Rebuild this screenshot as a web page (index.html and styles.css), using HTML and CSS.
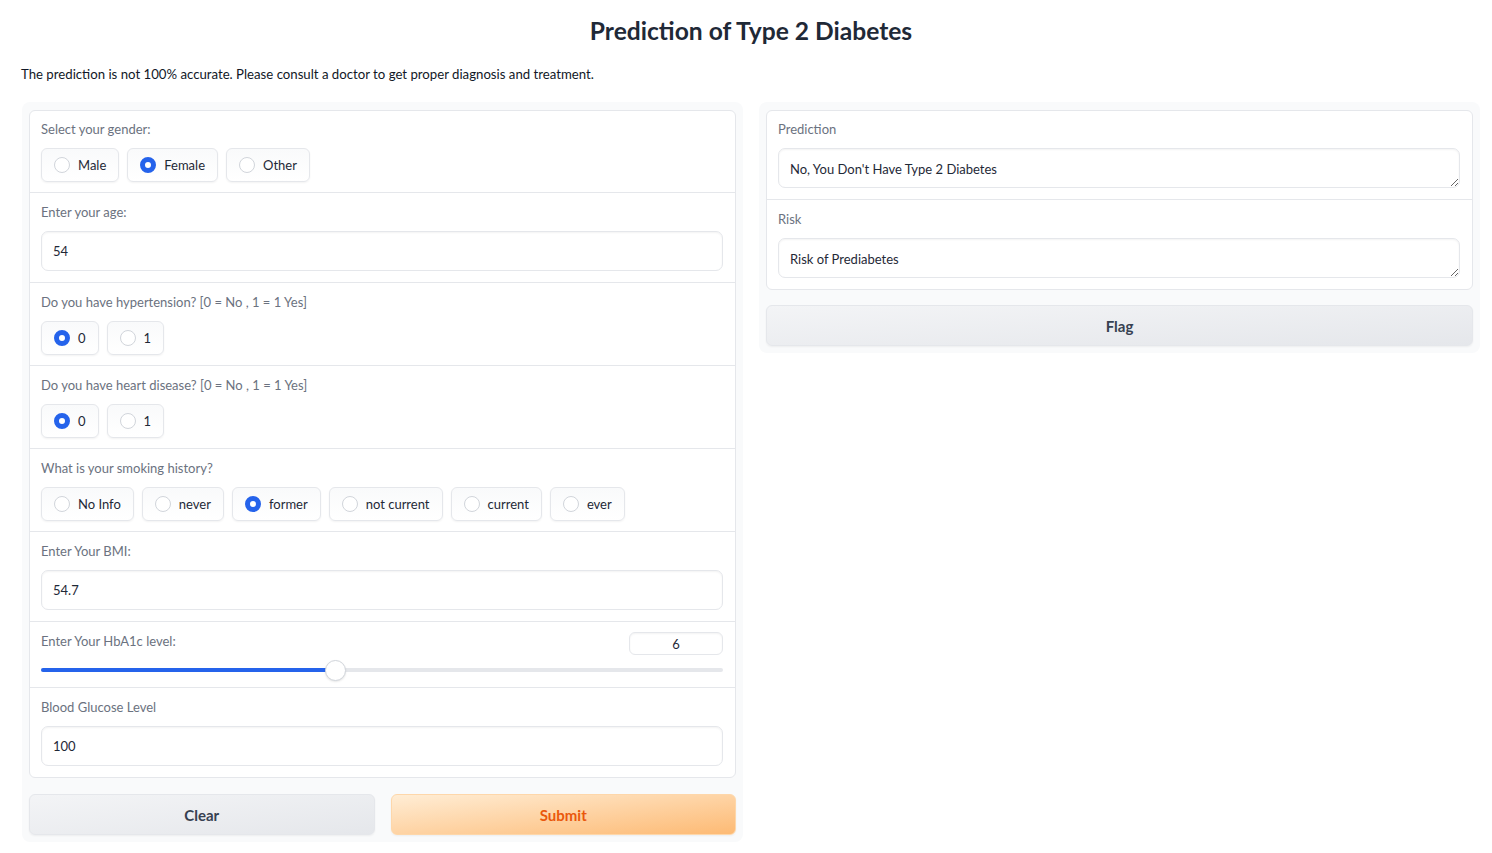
FILE: index.html
```html
<!DOCTYPE html>
<html lang="en">
<head>
<meta charset="utf-8">
<title>Prediction of Type 2 Diabetes</title>
<link rel="stylesheet" href="styles.css">
</head>
<body>
<div class="app">
  <h1 class="title">Prediction of Type 2 Diabetes</h1>
  <p class="desc">The prediction is not 100% accurate. Please consult a doctor to get proper diagnosis and treatment.</p>
  <div class="columns">
    <div class="panel">
      <div class="form">
        <div class="block">
          <div class="label">Select your gender:</div>
          <div class="radios">
            <span class="radio"><span class="dot"></span>Male</span>
            <span class="radio"><span class="dot on"></span>Female</span>
            <span class="radio"><span class="dot"></span>Other</span>
          </div>
        </div>
        <div class="block input-block">
          <div class="label">Enter your age:</div>
          <input class="field" type="text" value="54">
        </div>
        <div class="block">
          <div class="label">Do you have hypertension? [0 = No , 1 = 1 Yes]</div>
          <div class="radios">
            <span class="radio"><span class="dot on"></span>0</span>
            <span class="radio"><span class="dot"></span>1</span>
          </div>
        </div>
        <div class="block">
          <div class="label">Do you have heart disease? [0 = No , 1 = 1 Yes]</div>
          <div class="radios">
            <span class="radio"><span class="dot on"></span>0</span>
            <span class="radio"><span class="dot"></span>1</span>
          </div>
        </div>
        <div class="block">
          <div class="label">What is your smoking history?</div>
          <div class="radios">
            <span class="radio"><span class="dot"></span>No Info</span>
            <span class="radio"><span class="dot"></span>never</span>
            <span class="radio"><span class="dot on"></span>former</span>
            <span class="radio"><span class="dot"></span>not current</span>
            <span class="radio"><span class="dot"></span>current</span>
            <span class="radio"><span class="dot"></span>ever</span>
          </div>
        </div>
        <div class="block input-block">
          <div class="label">Enter Your BMI:</div>
          <input class="field" type="text" value="54.7">
        </div>
        <div class="block slider-block">
          <div class="slider-head">
            <div class="label">Enter Your HbA1c level:</div>
            <input class="num" type="text" value="6">
          </div>
          <div class="track"><div class="fill" style="width:43.2%"></div></div>
        </div>
        <div class="block input-block">
          <div class="label">Blood Glucose Level</div>
          <input class="field" type="text" value="100">
        </div>
      </div>
      <div class="actions">
        <button class="btn">Clear</button>
        <button class="btn primary">Submit</button>
      </div>
    </div>
    <div class="panel right">
      <div class="form">
        <div class="block input-block">
          <div class="label">Prediction</div>
          <textarea class="field area" rows="1" readonly>No, You Don't Have Type 2 Diabetes</textarea>
        </div>
        <div class="block input-block">
          <div class="label">Risk</div>
          <textarea class="field area" rows="1" readonly>Risk of Prediabetes</textarea>
        </div>
      </div>
      <div class="actions">
        <button class="btn">Flag</button>
      </div>
    </div>
  </div>
</div>
</body>
</html>
```
FILE: styles.css
```css
* { box-sizing: border-box; }
body {
  margin: 0;
  background: #fff;
  font-family: Lato, "Noto Sans", sans-serif;
  color: #1f2937;
}
.app {
  padding: 0 12px 0 22px;
}
.title {
  margin: 0;
  padding-top: 15px;
  height: 50px;
  text-align: center;
  font-size: 24.6px;
  font-weight: 700;
  line-height: 32px;
  color: #1f2937;
}
.desc {
  margin: 14px 0 0 -1px;
  font-size: 13.2px;
  line-height: 20px;
  color: #111827;
}
.columns {
  display: flex;
  gap: 16px;
  align-items: flex-start;
  margin-top: 18px;
}
.panel {
  flex: 1 1 0;
  background: #f9fafb;
  border-radius: 8px;
  padding: 8px 7px 7px;
}
.form {
  background: #fff;
  border: 1px solid #e5e7eb;
  border-radius: 6px;
}
.block {
  padding: 8px 12px 10px 11px;
  border-bottom: 1px solid #e5e7eb;
}
.block + .block { padding-top: 9px; }
.block.input-block { padding-bottom: 11px; }
.block:last-child { border-bottom: none; }
.label {
  font-size: 13px;
  line-height: 20px;
  color: #6b7280;
  margin-bottom: 9px;
}
.radios {
  display: flex;
  flex-wrap: wrap;
  gap: 8px;
}
.radio {
  display: inline-flex;
  align-items: center;
  gap: 8px;
  height: 34px;
  padding: 0 12px;
  border: 1px solid #e5e7eb;
  border-radius: 6px;
  background: linear-gradient(to bottom, #f9fafb, #ffffff);
  box-shadow: 0 1px 2px rgba(0,0,0,0.05);
  font-size: 13px;
  color: #1f2937;
}
.dot {
  width: 16px;
  height: 16px;
  border-radius: 50%;
  border: 1px solid #d1d5db;
  background: #fff;
  flex: none;
}
.dot.on {
  border: 5px solid #2563eb;
  background: #fff;
}
.field {
  display: block;
  width: 100%;
  height: 40px;
  padding: 0 11px;
  border: 1px solid #e5e7eb;
  border-radius: 7px;
  background: #fff;
  box-shadow: inset 0 1px 2px rgba(0,0,0,0.05);
  font-family: inherit;
  font-size: 13px;
  color: #1f2937;
  outline: none;
}
.area {
  resize: vertical;
  padding: 10px 11px;
  line-height: 20px;
  overflow: hidden;
}
.slider-block {
  padding-bottom: 15px;
}
.slider-head {
  display: flex;
  justify-content: space-between;
  align-items: flex-start;
  height: 33px;
}
.num {
  width: 94px;
  height: 23px;
  margin-top: 1px;
  border: 1px solid #e5e7eb;
  border-radius: 6px;
  text-align: center;
  font-family: inherit;
  font-size: 13px;
  color: #1f2937;
  box-shadow: inset 0 1px 2px rgba(0,0,0,0.05);
  outline: none;
}
.track {
  height: 4px;
  margin-top: 4px;
  background: #e5e7eb;
  border-radius: 2px;
}
.fill {
  position: relative;
  height: 100%;
  background: #2563eb;
  border-radius: 2px;
}
.fill::after {
  content: "";
  position: absolute;
  right: -10px;
  top: -8px;
  width: 19px;
  height: 19px;
  border-radius: 50%;
  background: #fff;
  border: 1px solid #d1d5db;
  box-shadow: 0 1px 2px rgba(0,0,0,0.1);
}
.actions {
  display: flex;
  gap: 16px;
  margin-top: 16px;
}
.right .actions { margin-top: 15px; }
.btn {
  flex: 1 1 0;
  height: 41px;
  border: 1px solid #e5e7eb;
  border-radius: 6px;
  background: linear-gradient(to bottom right, #f3f4f6, #e5e7eb);
  box-shadow: 0 1px 2px rgba(0,0,0,0.05);
  font-family: inherit;
  font-size: 15px;
  font-weight: 700;
  color: #374151;
}
.btn.primary {
  border-color: #fed7aa;
  background: linear-gradient(to bottom right, #ffedd5, #fdba74);
  color: #ea580c;
}
```
